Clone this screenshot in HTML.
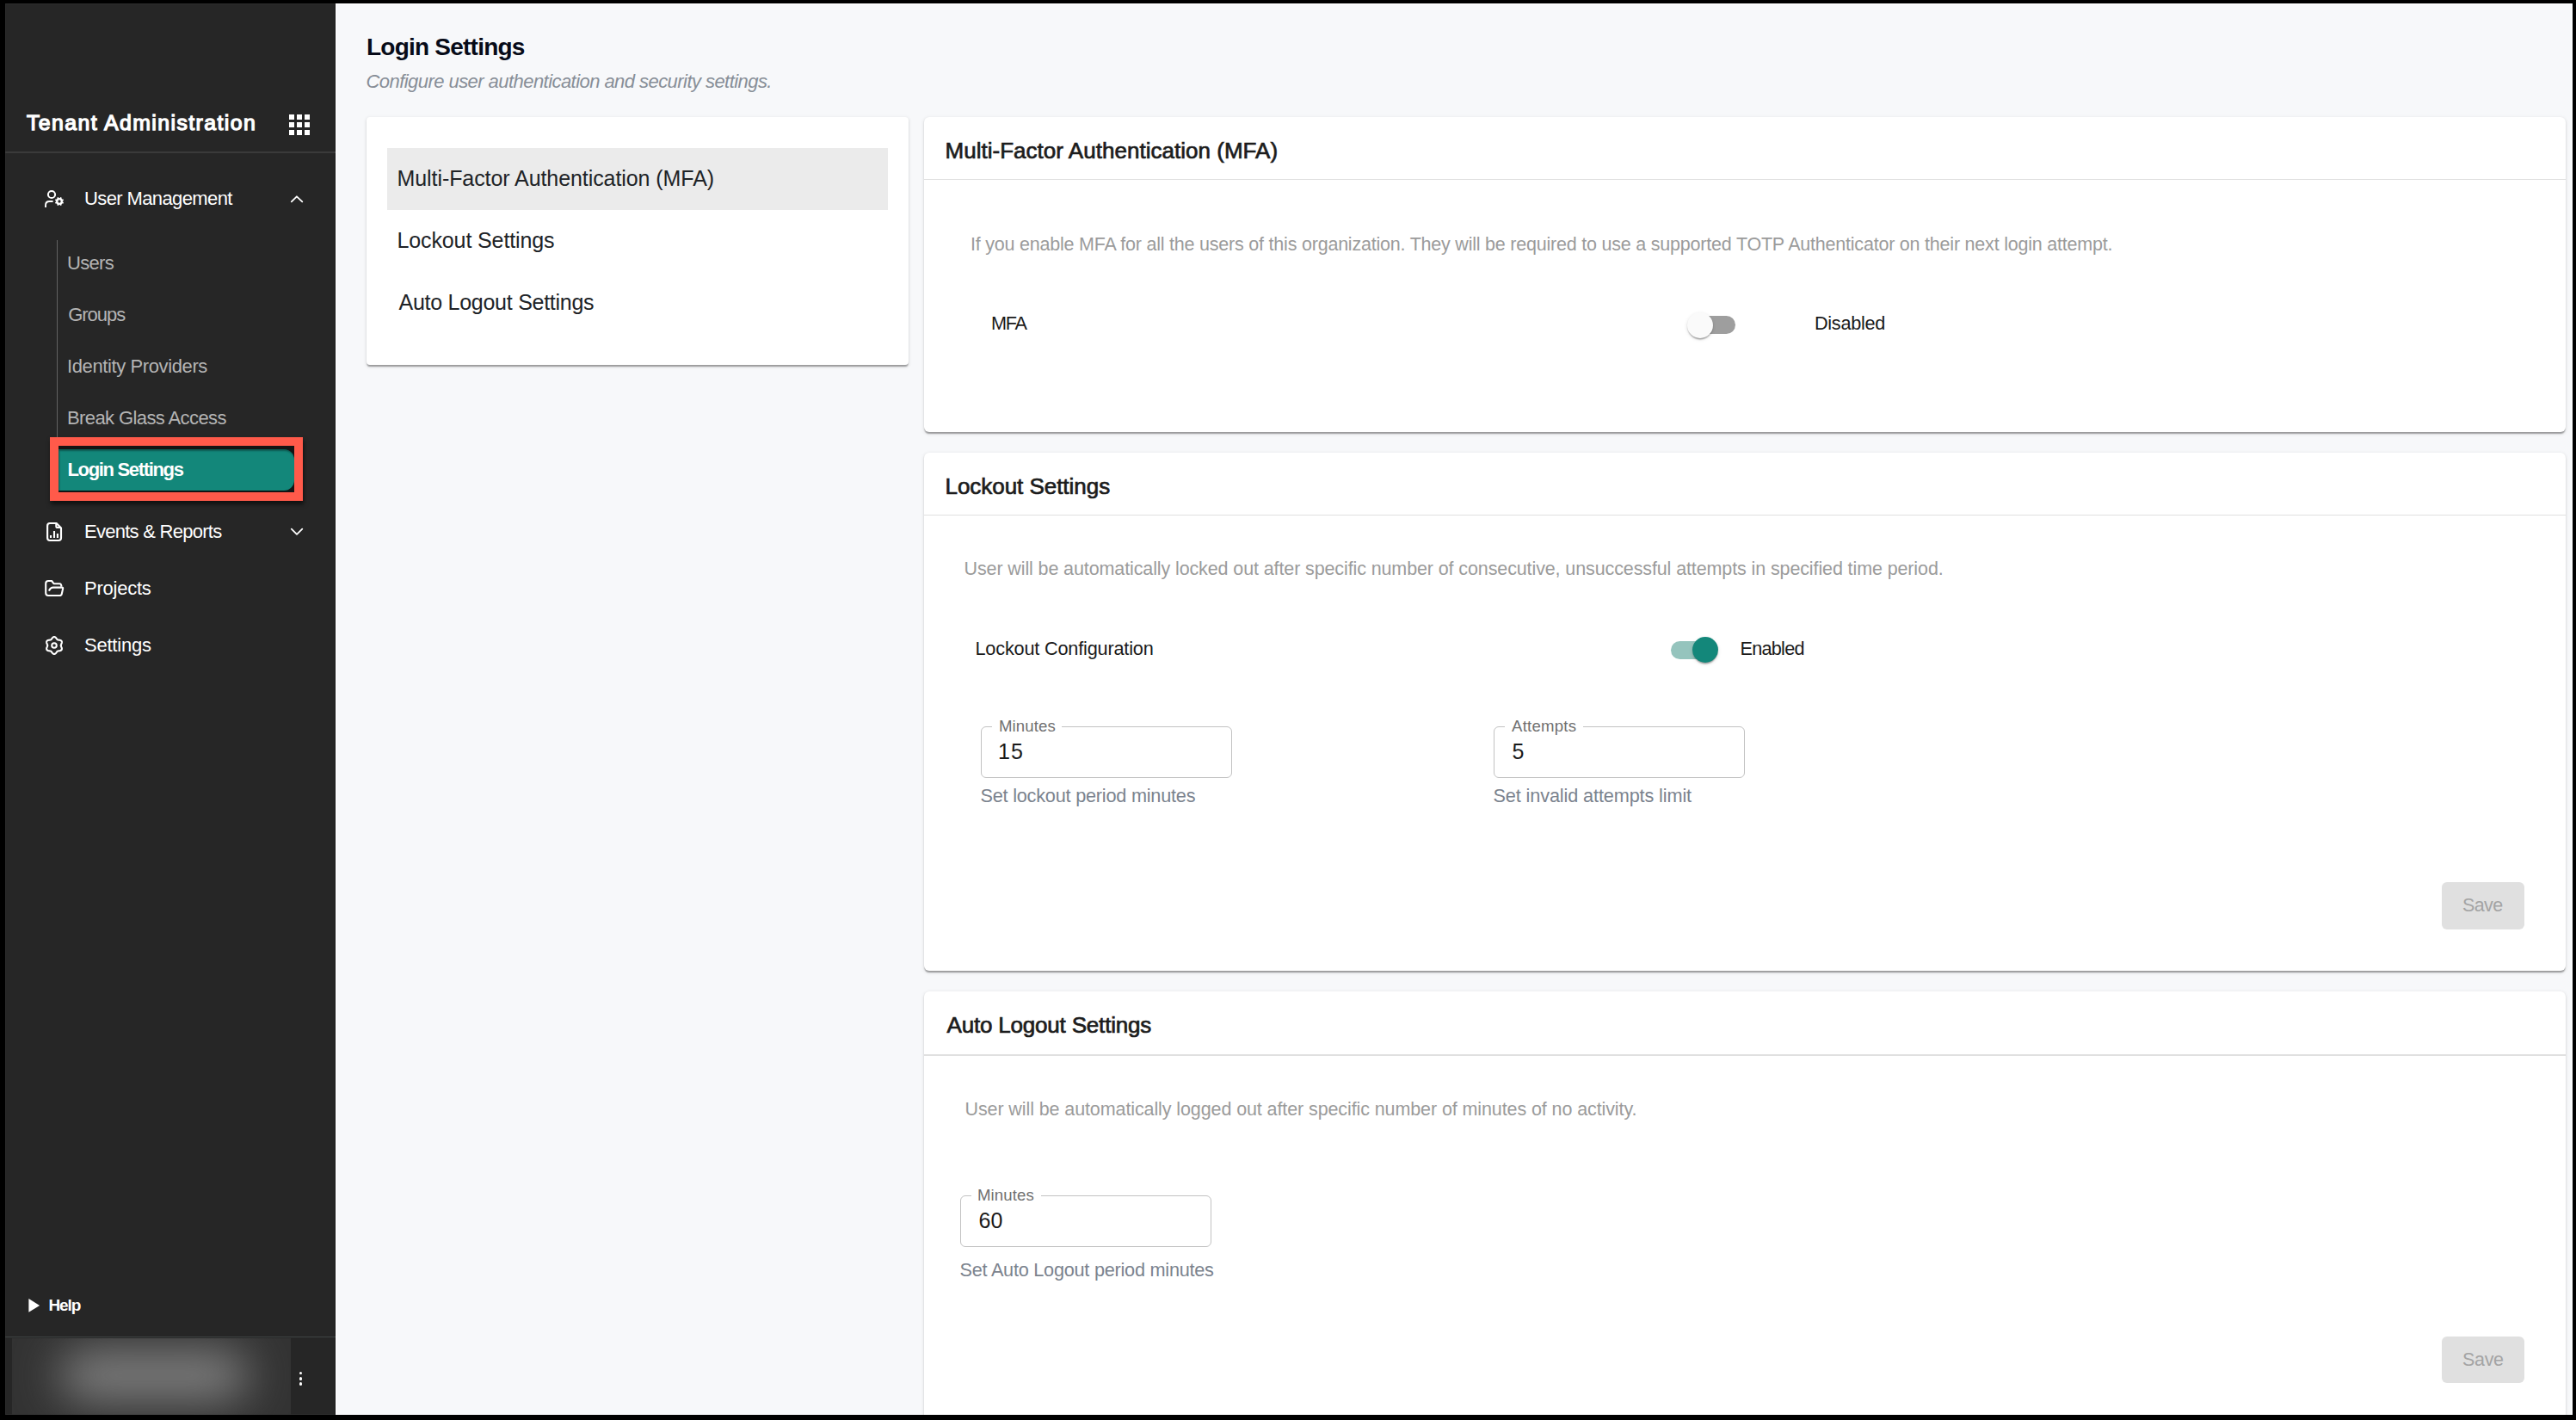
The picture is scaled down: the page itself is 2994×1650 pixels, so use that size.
<!DOCTYPE html>
<html>
<head>
<meta charset="utf-8">
<title>Login Settings</title>
<style>
html,body{margin:0;padding:0;}
body{width:2994px;height:1650px;background:#000;position:relative;overflow:hidden;font-family:"Liberation Sans",sans-serif;}
#clip{position:absolute;left:6px;top:4px;width:2984px;height:1640px;overflow:hidden;}
#inner{position:absolute;left:-6px;top:-4px;width:2994px;height:1650px;}
.a{position:absolute;}
.t{position:absolute;white-space:nowrap;line-height:1;}
#side{left:6px;top:4px;width:384px;height:1640px;background:#262626;box-shadow:inset 1px 1.3px 0 #2c2c2c,inset -1px 0 0 #1c1c1c,inset 0 -1px 0 #2e2e2e;}
#main{left:390px;top:4px;width:2600px;height:1640px;background:#f7f8fa;box-shadow:inset 1.2px 1.2px 0 #fff,inset -1px 0 0 #fff;}
.card{position:absolute;background:#fff;border-radius:6px;box-shadow:0 3px 1.5px -1.5px rgba(0,0,0,.2),0 1.5px 1.5px 0 rgba(0,0,0,.14),0 1.5px 4.5px 0 rgba(0,0,0,.12);}
.div{position:absolute;height:1.5px;background:#e0e0e0;}
.fld{position:absolute;border:1.5px solid #c2c2c2;border-radius:6px;box-sizing:border-box;}
.btn{position:absolute;background:#e0e0e0;border-radius:6px;}
.trk{border-radius:10.5px;}
.thumb{border-radius:50%;box-shadow:0 3px 1.5px -1.5px rgba(0,0,0,.2),0 1.5px 1.5px 0 rgba(0,0,0,.14),0 1.5px 4.5px 0 rgba(0,0,0,.12);}
</style>
</head>
<body>
<div id="clip"><div id="inner">

<div class="a" id="side"></div>
<div class="a" id="main"></div>
<div class="a" style="left:6px;top:176px;width:384px;height:1.5px;background:#3a3a3a;"></div>
<div class="a" style="left:336px;top:133px;width:6px;height:6px;background:#fff;"></div><div class="a" style="left:345px;top:133px;width:6px;height:6px;background:#fff;"></div><div class="a" style="left:354px;top:133px;width:6px;height:6px;background:#fff;"></div><div class="a" style="left:336px;top:142px;width:6px;height:6px;background:#fff;"></div><div class="a" style="left:345px;top:142px;width:6px;height:6px;background:#fff;"></div><div class="a" style="left:354px;top:142px;width:6px;height:6px;background:#fff;"></div><div class="a" style="left:336px;top:151px;width:6px;height:6px;background:#fff;"></div><div class="a" style="left:345px;top:151px;width:6px;height:6px;background:#fff;"></div><div class="a" style="left:354px;top:151px;width:6px;height:6px;background:#fff;"></div>
<svg class="a" style="left:0;top:0;" width="400" height="800" viewBox="0 0 400 800" fill="none" stroke="#fff" stroke-width="2" stroke-linecap="butt" stroke-linejoin="round">
 <circle cx="60" cy="226" r="4.1" stroke-width="2"/>
 <path d="M53 241 V238.5 Q53 234 57.5 234 H61.6" stroke-width="1.9"/>
 <circle cx="69" cy="234" r="2.8" stroke-width="2.3"/>
 <g fill="#fff" stroke="none"><rect x="68.05" y="228.95" width="1.9" height="1.9" transform="rotate(22.5 69 234)"/><rect x="68.05" y="228.95" width="1.9" height="1.9" transform="rotate(67.5 69 234)"/><rect x="68.05" y="228.95" width="1.9" height="1.9" transform="rotate(112.5 69 234)"/><rect x="68.05" y="228.95" width="1.9" height="1.9" transform="rotate(157.5 69 234)"/><rect x="68.05" y="228.95" width="1.9" height="1.9" transform="rotate(202.5 69 234)"/><rect x="68.05" y="228.95" width="1.9" height="1.9" transform="rotate(247.5 69 234)"/><rect x="68.05" y="228.95" width="1.9" height="1.9" transform="rotate(292.5 69 234)"/><rect x="68.05" y="228.95" width="1.9" height="1.9" transform="rotate(337.5 69 234)"/></g>
 <path d="M338.8 234.3 L344.9 228.3 L351.3 234.3" stroke-width="1.8" stroke-linecap="round"/>
 <path d="M338.8 614.7 L345 620.8 L351.3 614.7" stroke-width="1.8" stroke-linecap="round"/>
 <path d="M65.3 608 V611.4 Q65.3 613 66.9 613 H71" stroke-width="2.1"/>
 <path d="M68 628 H58 Q55.1 628 55.1 625 V611 Q55.1 608 58 608 H65.6 L71 613.6 V625 Q71 628 68 628Z" stroke-width="2.15"/>
 <path d="M59 625 V622" stroke-width="2.1"/>
 <path d="M63 625 V617" stroke-width="2.1"/>
 <path d="M66.9 625 V620" stroke-width="2.1"/>
 <path d="M56.9 686.6 Q58.6 682.6 61.6 682.6 H72 Q73.4 682.6 73.1 684.1 L71.8 690 Q71.4 692 69.4 692 H56.2 Q53.2 692 53.2 689 V678 Q53.2 675 56.2 675 H60.1 L62.5 678.2 H69.2 Q71.2 678.2 71.5 681.6" stroke-width="2.1"/>
 <path d="M70.75 750.00 L70.75 749.86 L70.77 749.73 L70.79 749.59 L70.83 749.45 L70.87 749.31 L70.92 749.17 L70.97 749.02 L71.03 748.87 L71.10 748.72 L71.17 748.56 L71.25 748.40 L71.32 748.23 L71.40 748.06 L71.48 747.89 L71.55 747.71 L71.62 747.53 L71.68 747.35 L71.74 747.16 L71.79 746.97 L71.83 746.79 L71.87 746.60 L71.89 746.41 L71.90 746.22 L71.90 746.04 L71.88 745.86 L71.86 745.68 L71.82 745.51 L71.76 745.34 L71.70 745.18 L71.62 745.02 L71.52 744.88 L71.42 744.74 L71.30 744.61 L71.17 744.49 L71.03 744.38 L70.88 744.28 L70.72 744.18 L70.55 744.10 L70.38 744.02 L70.20 743.96 L70.02 743.90 L69.83 743.85 L69.64 743.81 L69.45 743.77 L69.26 743.74 L69.07 743.72 L68.88 743.69 L68.69 743.68 L68.51 743.66 L68.34 743.64 L68.16 743.62 L68.00 743.61 L67.83 743.58 L67.68 743.56 L67.53 743.53 L67.39 743.50 L67.25 743.46 L67.12 743.41 L66.99 743.35 L66.88 743.29 L66.76 743.22 L66.65 743.14 L66.54 743.05 L66.44 742.95 L66.34 742.84 L66.24 742.73 L66.14 742.61 L66.04 742.48 L65.94 742.34 L65.84 742.20 L65.74 742.06 L65.63 741.91 L65.52 741.76 L65.41 741.60 L65.29 741.45 L65.17 741.30 L65.04 741.15 L64.91 741.01 L64.77 740.87 L64.63 740.74 L64.49 740.62 L64.33 740.51 L64.18 740.40 L64.02 740.31 L63.85 740.23 L63.69 740.17 L63.52 740.12 L63.35 740.08 L63.17 740.06 L63.00 740.05 L62.83 740.06 L62.65 740.08 L62.48 740.12 L62.31 740.17 L62.15 740.23 L61.98 740.31 L61.82 740.40 L61.67 740.51 L61.51 740.62 L61.37 740.74 L61.23 740.87 L61.09 741.01 L60.96 741.15 L60.83 741.30 L60.71 741.45 L60.59 741.60 L60.48 741.76 L60.37 741.91 L60.26 742.06 L60.16 742.20 L60.06 742.34 L59.96 742.48 L59.86 742.61 L59.76 742.73 L59.66 742.84 L59.56 742.95 L59.46 743.05 L59.35 743.14 L59.24 743.22 L59.12 743.29 L59.01 743.35 L58.88 743.41 L58.75 743.46 L58.61 743.50 L58.47 743.53 L58.32 743.56 L58.17 743.58 L58.00 743.61 L57.84 743.62 L57.66 743.64 L57.49 743.66 L57.31 743.68 L57.12 743.69 L56.93 743.72 L56.74 743.74 L56.55 743.77 L56.36 743.81 L56.17 743.85 L55.98 743.90 L55.80 743.96 L55.62 744.02 L55.45 744.10 L55.28 744.18 L55.12 744.28 L54.97 744.38 L54.83 744.49 L54.70 744.61 L54.58 744.74 L54.48 744.88 L54.38 745.02 L54.30 745.18 L54.24 745.34 L54.18 745.51 L54.14 745.68 L54.12 745.86 L54.10 746.04 L54.10 746.22 L54.11 746.41 L54.13 746.60 L54.17 746.79 L54.21 746.97 L54.26 747.16 L54.32 747.35 L54.38 747.53 L54.45 747.71 L54.52 747.89 L54.60 748.06 L54.68 748.23 L54.75 748.40 L54.83 748.56 L54.90 748.72 L54.97 748.87 L55.03 749.02 L55.08 749.17 L55.13 749.31 L55.17 749.45 L55.21 749.59 L55.23 749.73 L55.25 749.86 L55.25 750.00 L55.25 750.14 L55.23 750.27 L55.21 750.41 L55.17 750.55 L55.13 750.69 L55.08 750.83 L55.03 750.98 L54.97 751.13 L54.90 751.28 L54.83 751.44 L54.75 751.60 L54.68 751.77 L54.60 751.94 L54.52 752.11 L54.45 752.29 L54.38 752.47 L54.32 752.65 L54.26 752.84 L54.21 753.03 L54.17 753.21 L54.13 753.40 L54.11 753.59 L54.10 753.78 L54.10 753.96 L54.12 754.14 L54.14 754.32 L54.18 754.49 L54.24 754.66 L54.30 754.82 L54.38 754.98 L54.48 755.12 L54.58 755.26 L54.70 755.39 L54.83 755.51 L54.97 755.62 L55.12 755.72 L55.28 755.82 L55.45 755.90 L55.62 755.98 L55.80 756.04 L55.98 756.10 L56.17 756.15 L56.36 756.19 L56.55 756.23 L56.74 756.26 L56.93 756.28 L57.12 756.31 L57.31 756.32 L57.49 756.34 L57.66 756.36 L57.84 756.38 L58.00 756.39 L58.17 756.42 L58.32 756.44 L58.47 756.47 L58.61 756.50 L58.75 756.54 L58.88 756.59 L59.01 756.65 L59.12 756.71 L59.24 756.78 L59.35 756.86 L59.46 756.95 L59.56 757.05 L59.66 757.16 L59.76 757.27 L59.86 757.39 L59.96 757.52 L60.06 757.66 L60.16 757.80 L60.26 757.94 L60.37 758.09 L60.48 758.24 L60.59 758.40 L60.71 758.55 L60.83 758.70 L60.96 758.85 L61.09 758.99 L61.23 759.13 L61.37 759.26 L61.51 759.38 L61.67 759.49 L61.82 759.60 L61.98 759.69 L62.15 759.77 L62.31 759.83 L62.48 759.88 L62.65 759.92 L62.83 759.94 L63.00 759.95 L63.17 759.94 L63.35 759.92 L63.52 759.88 L63.69 759.83 L63.85 759.77 L64.02 759.69 L64.18 759.60 L64.33 759.49 L64.49 759.38 L64.63 759.26 L64.77 759.13 L64.91 758.99 L65.04 758.85 L65.17 758.70 L65.29 758.55 L65.41 758.40 L65.52 758.24 L65.63 758.09 L65.74 757.94 L65.84 757.80 L65.94 757.66 L66.04 757.52 L66.14 757.39 L66.24 757.27 L66.34 757.16 L66.44 757.05 L66.54 756.95 L66.65 756.86 L66.76 756.78 L66.88 756.71 L66.99 756.65 L67.12 756.59 L67.25 756.54 L67.39 756.50 L67.53 756.47 L67.68 756.44 L67.83 756.42 L68.00 756.39 L68.16 756.38 L68.34 756.36 L68.51 756.34 L68.69 756.32 L68.88 756.31 L69.07 756.28 L69.26 756.26 L69.45 756.23 L69.64 756.19 L69.83 756.15 L70.02 756.10 L70.20 756.04 L70.38 755.98 L70.55 755.90 L70.72 755.82 L70.88 755.72 L71.03 755.62 L71.17 755.51 L71.30 755.39 L71.42 755.26 L71.52 755.12 L71.62 754.98 L71.70 754.82 L71.76 754.66 L71.82 754.49 L71.86 754.32 L71.88 754.14 L71.90 753.96 L71.90 753.78 L71.89 753.59 L71.87 753.40 L71.83 753.21 L71.79 753.03 L71.74 752.84 L71.68 752.65 L71.62 752.47 L71.55 752.29 L71.48 752.11 L71.40 751.94 L71.32 751.77 L71.25 751.60 L71.17 751.44 L71.10 751.28 L71.03 751.13 L70.97 750.98 L70.92 750.83 L70.87 750.69 L70.83 750.55 L70.79 750.41 L70.77 750.27 L70.75 750.14Z" stroke-width="2.1"/>
 <circle cx="63" cy="750" r="2.8" stroke-width="2.0"/>
</svg>
<div class="a" style="left:66px;top:279px;width:1px;height:229px;background:#626262;"></div>
<div class="a" style="left:58px;top:508px;width:294px;height:74px;background:#ff5a4a;box-shadow:1px 4px 5px rgba(0,0,0,0.6);"></div>
<div class="a" style="left:68px;top:518px;width:274px;height:54px;background:#141414;"></div>
<div class="a" style="left:68px;top:522px;width:274px;height:48px;background:#13877a;border-radius:0 12px 12px 0;box-shadow:inset 1px 2px 2px rgba(0,0,0,0.35);"></div>
<svg class="a" style="left:0;top:1500px;" width="60" height="40" viewBox="0 1500 60 40"><path d="M33.4 1509 L46.1 1517 L33.4 1524.8Z" fill="#fff"/></svg>
<div class="a" style="left:6px;top:1553px;width:384px;height:1px;background:#3f4343;"></div>
<div class="a" style="left:14px;top:1554.5px;width:324px;height:89.5px;background:#333;overflow:hidden;">
  <div class="a" style="left:55px;top:14px;width:220px;height:58px;background:#808080;border-radius:40px;filter:blur(26px);"></div>
</div>
<div class="a" style="left:347.8px;top:1593.9px;width:3.6px;height:3.6px;border-radius:50%;background:#fff;"></div>
<div class="a" style="left:347.8px;top:1600.2px;width:3.6px;height:3.6px;border-radius:50%;background:#fff;"></div>
<div class="a" style="left:347.8px;top:1606.4px;width:3.6px;height:3.6px;border-radius:50%;background:#fff;"></div>

<div class="card" style="left:426px;top:136px;width:630px;height:288px;border-radius:4px;"></div>
<div class="a" style="left:450px;top:172px;width:582px;height:72px;background:#ebebeb;"></div>

<div class="card" style="left:1074px;top:136px;width:1908px;height:366px;"></div>
<div class="div" style="left:1074px;top:207.6px;width:1908px;"></div>
<div class="a trk" style="left:1965px;top:367px;width:52px;height:21px;background:#9e9e9e;"></div>
<div class="a thumb" style="left:1960.6px;top:362.7px;width:30px;height:30px;background:#fafafa;"></div>

<div class="card" style="left:1074px;top:525.6px;width:1908px;height:602.4px;"></div>
<div class="div" style="left:1074px;top:597.5px;width:1908px;"></div>
<div class="a trk" style="left:1941.5px;top:745px;width:51px;height:21px;background:#95c4bd;"></div>
<div class="a thumb" style="left:1967px;top:740px;width:30px;height:30px;background:#13877a;"></div>
<div class="fld" style="left:1140px;top:844px;width:292px;height:60px;"></div>
<div class="a" style="left:1153px;top:840px;width:81px;height:8px;background:#fff;"></div>
<div class="fld" style="left:1736px;top:844px;width:292px;height:60px;"></div>
<div class="a" style="left:1749px;top:840px;width:91px;height:8px;background:#fff;"></div>
<div class="btn" style="left:2838px;top:1025px;width:96px;height:55px;"></div>

<div class="card" style="left:1074px;top:1152px;width:1908px;height:600px;"></div>
<div class="div" style="left:1074px;top:1225px;width:1908px;"></div>
<div class="fld" style="left:1116px;top:1389px;width:292px;height:60px;"></div>
<div class="a" style="left:1129px;top:1385px;width:81px;height:8px;background:#fff;"></div>
<div class="btn" style="left:2838px;top:1553px;width:96px;height:54px;"></div>

<div class="t" id="t1" style="left:31.00px;top:131.22px;font-size:24.80px;letter-spacing:1.435px;color:#fff;-webkit-text-stroke:1.3px #fff;">Tenant Administration</div>
<div class="t" id="t2" style="left:98.00px;top:219.90px;font-size:22.00px;letter-spacing:-0.614px;color:#fff;">User Management</div>
<div class="t" id="t3" style="left:78.00px;top:294.90px;font-size:22.00px;letter-spacing:-0.700px;color:#b4b4b4;">Users</div>
<div class="t" id="t4" style="left:79.20px;top:355.30px;font-size:22.00px;letter-spacing:-1.040px;color:#b4b4b4;">Groups</div>
<div class="t" id="t5" style="left:78.00px;top:415.30px;font-size:22.00px;letter-spacing:-0.388px;color:#b4b4b4;">Identity Providers</div>
<div class="t" id="t6" style="left:78.00px;top:475.30px;font-size:22.00px;letter-spacing:-0.600px;color:#b4b4b4;">Break Glass Access</div>
<div class="t" id="t7" style="left:78.50px;top:535.30px;font-size:22.00px;letter-spacing:-1.338px;font-weight:bold;color:#fff;">Login Settings</div>
<div class="t" id="t8" style="left:98.00px;top:607.10px;font-size:22.00px;letter-spacing:-0.733px;color:#fff;">Events &amp; Reports</div>
<div class="t" id="t9" style="left:98.00px;top:672.90px;font-size:22.00px;letter-spacing:-0.229px;color:#fff;">Projects</div>
<div class="t" id="t10" style="left:98.00px;top:739.30px;font-size:22.00px;letter-spacing:-0.229px;color:#fff;">Settings</div>
<div class="t" id="t11" style="left:56.50px;top:1506.80px;font-size:19.00px;letter-spacing:-1.133px;font-weight:bold;color:#fff;">Help</div>
<div class="t" id="t12" style="left:426.00px;top:41.25px;font-size:28.00px;letter-spacing:-0.769px;font-weight:bold;color:#070b18;">Login Settings</div>
<div class="t" id="t13" style="left:425.50px;top:83.65px;font-size:22.00px;letter-spacing:-0.553px;font-style:italic;color:#878e97;">Configure user authentication and security settings.</div>
<div class="t" id="t14" style="left:461.50px;top:194.85px;font-size:25.00px;letter-spacing:-0.075px;color:#202327;">Multi-Factor Authentication (MFA)</div>
<div class="t" id="t15" style="left:461.50px;top:267.25px;font-size:25.00px;letter-spacing:-0.120px;color:#202327;">Lockout Settings</div>
<div class="t" id="t16" style="left:463.50px;top:339.25px;font-size:25.00px;letter-spacing:-0.263px;color:#202327;">Auto Logout Settings</div>
<div class="t" id="t17" style="left:1098.50px;top:161.85px;font-size:26.00px;letter-spacing:0.025px;color:#1c1c1c;-webkit-text-stroke:0.7px #1c1c1c;">Multi-Factor Authentication (MFA)</div>
<div class="t" id="t18" style="left:1128.00px;top:273.93px;font-size:21.50px;letter-spacing:-0.214px;color:#9b9b9b;">If you enable MFA for all the users of this organization. They will be required to use a supported TOTP Authenticator on their next login attempt.</div>
<div class="t" id="t19" style="left:1152.00px;top:365.21px;font-size:21.70px;letter-spacing:-1.300px;color:#1a1a1a;">MFA</div>
<div class="t" id="t20" style="left:2109.00px;top:365.16px;font-size:21.70px;letter-spacing:-0.314px;color:#1a1a1a;">Disabled</div>
<div class="t" id="t21" style="left:1098.50px;top:552.10px;font-size:26.00px;letter-spacing:-0.040px;color:#1c1c1c;-webkit-text-stroke:0.7px #1c1c1c;">Lockout Settings</div>
<div class="t" id="t22" style="left:1120.50px;top:651.47px;font-size:21.50px;letter-spacing:-0.113px;color:#9b9b9b;">User will be automatically locked out after specific number of consecutive, unsuccessful attempts in specified time period.</div>
<div class="t" id="t23" style="left:1133.50px;top:742.55px;font-size:21.70px;letter-spacing:-0.190px;color:#1a1a1a;">Lockout Configuration</div>
<div class="t" id="t24" style="left:2022.50px;top:742.55px;font-size:21.70px;letter-spacing:-0.767px;color:#1a1a1a;">Enabled</div>
<div class="t" id="t25" style="left:1161.00px;top:835.09px;font-size:18.60px;letter-spacing:0.100px;color:#707070;">Minutes</div>
<div class="t" id="t26" style="left:1160.00px;top:860.65px;font-size:25.00px;letter-spacing:1.200px;color:#1a1a1a;">15</div>
<div class="t" id="t27" style="left:1139.50px;top:913.55px;font-size:21.70px;letter-spacing:-0.224px;color:#7b838e;">Set lockout period minutes</div>
<div class="t" id="t28" style="left:1757.00px;top:835.09px;font-size:18.60px;letter-spacing:0.229px;color:#707070;">Attempts</div>
<div class="t" id="t29" style="left:1757.50px;top:860.65px;font-size:25.00px;letter-spacing:0.000px;color:#1a1a1a;">5</div>
<div class="t" id="t30" style="left:1735.50px;top:913.55px;font-size:21.70px;letter-spacing:-0.128px;color:#7b838e;">Set invalid attempts limit</div>
<div class="t" id="t31" style="left:2862.00px;top:1042.02px;font-size:21.50px;letter-spacing:-0.600px;color:#a4a4a4;">Save</div>
<div class="t" id="t32" style="left:1100.50px;top:1177.70px;font-size:26.00px;letter-spacing:-0.189px;color:#1c1c1c;-webkit-text-stroke:0.7px #1c1c1c;">Auto Logout Settings</div>
<div class="t" id="t33" style="left:1121.50px;top:1279.02px;font-size:21.50px;letter-spacing:-0.101px;color:#9b9b9b;">User will be automatically logged out after specific number of minutes of no activity.</div>
<div class="t" id="t34" style="left:1136.00px;top:1380.09px;font-size:18.60px;letter-spacing:0.100px;color:#707070;">Minutes</div>
<div class="t" id="t35" style="left:1137.50px;top:1405.75px;font-size:25.00px;letter-spacing:0.000px;color:#1a1a1a;">60</div>
<div class="t" id="t36" style="left:1115.50px;top:1465.15px;font-size:21.70px;letter-spacing:-0.248px;color:#7b838e;">Set Auto Logout period minutes</div>
<div class="t" id="t37" style="left:2862.00px;top:1569.82px;font-size:21.50px;letter-spacing:-0.333px;color:#a4a4a4;">Save</div>
</div></div>
</body>
</html>
